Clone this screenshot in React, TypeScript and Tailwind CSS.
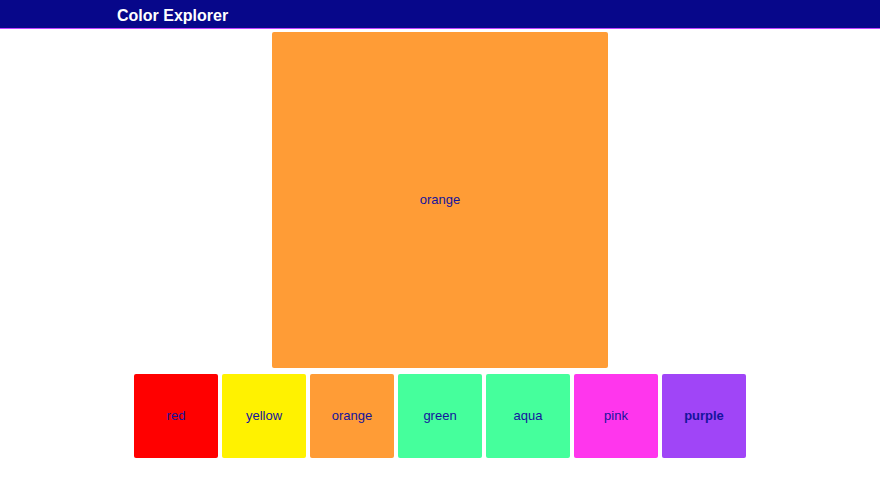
import React, { useState } from "react";

type Swatch = {
  name: string;
  bg: string;
  border: string;
};

const swatches: Swatch[] = [
  { name: "red", bg: "bg-[#ff0000]", border: "border-[#ff0000]" },
  { name: "yellow", bg: "bg-[#fff200]", border: "border-[#fff200]" },
  { name: "orange", bg: "bg-[#ff9c36]", border: "border-[#ff9c36]" },
  { name: "green", bg: "bg-[#45ff9c]", border: "border-[#45ff9c]" },
  { name: "aqua", bg: "bg-[#45ff9c]", border: "border-[#45ff9c]" },
  { name: "pink", bg: "bg-[#ff36ed]", border: "border-[#ff36ed]" },
  { name: "purple", bg: "bg-[#a045f7]", border: "border-[#a045f7]" },
];

export default function App() {
  const [selected, setSelected] = useState<string>("orange");
  const current = swatches.find((s) => s.name === selected) ?? swatches[2];

  return (
    <div className="min-h-[496px] w-[880px] bg-white font-['Liberation_Sans',Arial,sans-serif]">
      {/* header */}
      <div className="h-[29px] bg-[#07078a] border-b border-[#c044ff] flex items-center pl-[117px] pt-[3px]">
        <h1 className="text-white font-bold text-[16px] leading-none">Color Explorer</h1>
      </div>

      {/* preview */}
      <div className="flex justify-center pt-[3px]">
        <div
          className={`w-[336px] h-[336px] rounded-[2px] border border-dotted ${current.bg} ${current.border} flex items-center justify-center`}
        >
          <span className="text-[#14149c] text-[13px]">{current.name}</span>
        </div>
      </div>

      {/* swatch row */}
      <div className="flex justify-center gap-[4px] mt-[6px]">
        {swatches.map((s) => (
          <button
            key={s.name}
            onClick={() => setSelected(s.name)}
            className={`w-[84px] h-[84px] rounded-[2px] border border-dotted ${s.bg} ${s.border} flex items-center justify-center text-[13px] text-[#14149c] ${s.name === "purple" ? "font-bold" : ""}`}
          >
            {s.name}
          </button>
        ))}
      </div>
    </div>
  );
}
